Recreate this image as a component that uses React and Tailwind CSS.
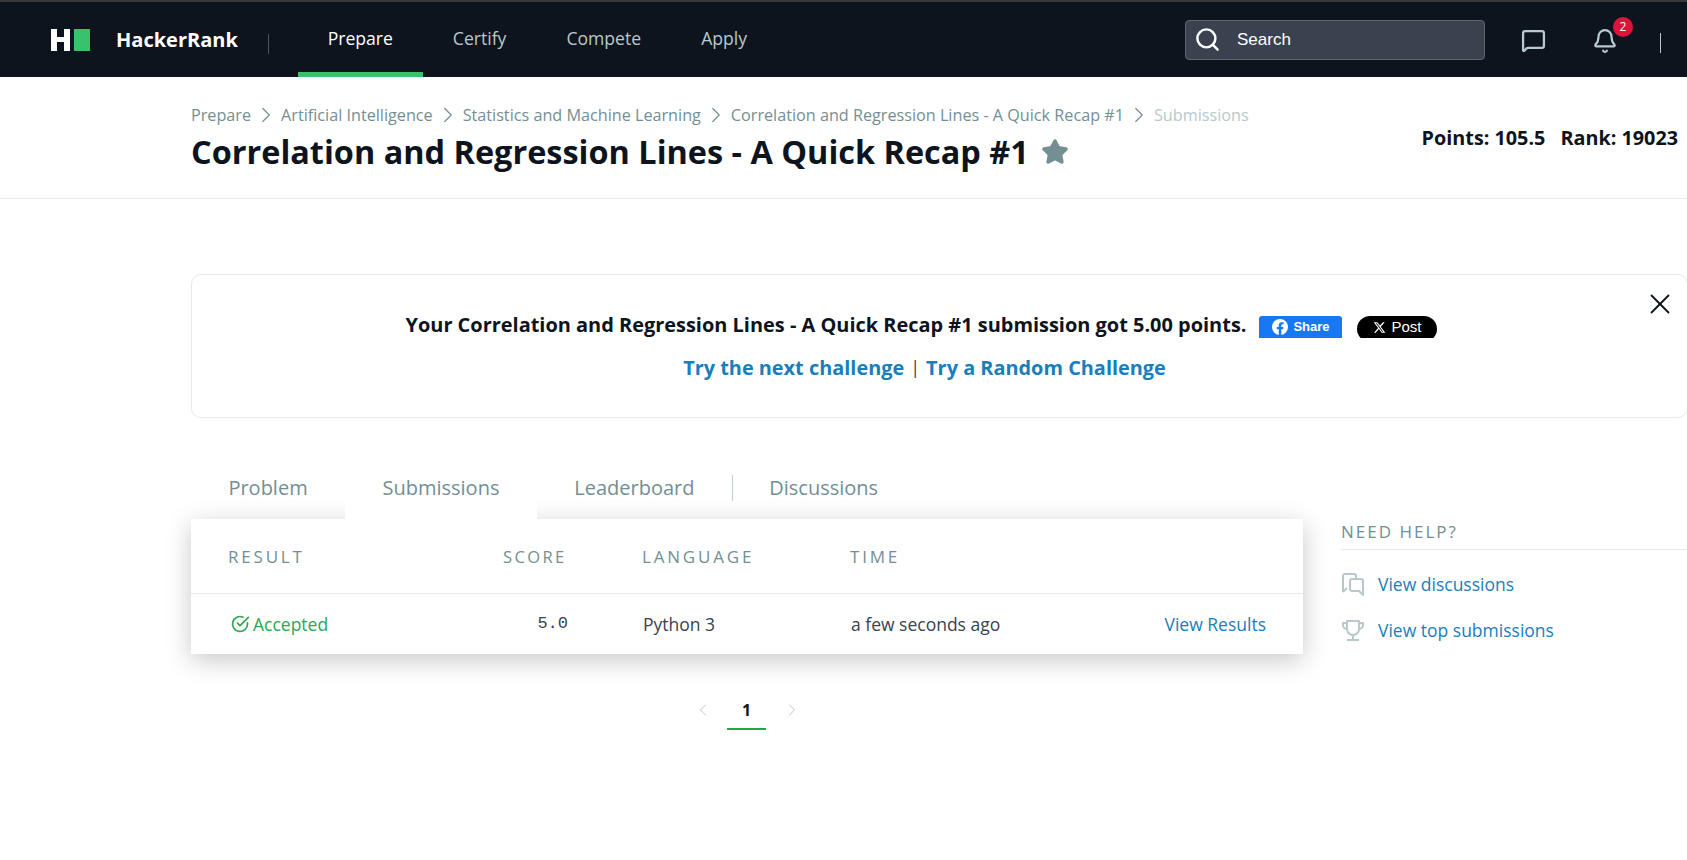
import React from "react";
import { Search, MessageSquare, Bell, ChevronRight, ChevronLeft, X, Star } from "lucide-react";

const crumbs = ["Prepare", "Artificial Intelligence", "Statistics and Machine Learning", "Correlation and Regression Lines - A Quick Recap #1"];

function Logo() {
  return (
    <div className="flex items-center gap-[4px] ml-[51px] w-[39px] h-[22px]">
      <svg width="19" height="22" viewBox="0 0 19 22"><path d="M0 0h6v8h7V0h6v22h-6v-9H6v9H0z" fill="#fff" /></svg>
      <div className="w-[16px] h-[22px] bg-[#39c16c]" />
    </div>
  );
}

function NavItem({ children, active, className }) {
  return (
    <a className={"h-full flex items-center text-[17.6px] pt-[3px] " + (active ? "text-white border-b-[5px] border-[#39c16c] " : "text-[#b7c9cc] pb-[5px] ") + className}>
      {children}
    </a>
  );
}

function Tab({ children, active, divider }) {
  return (
    <div className={"relative h-[66px] px-[37.4px] pt-[17px] text-[20px] leading-[26px] text-[#738f93] " + (active ? "bg-white z-10" : "")}>
      {children}
      {divider && <span className="absolute -right-[1px] top-[17px] h-[26px] w-px bg-[#c2cdcf]" />}
    </div>
  );
}

export default function App() {
  return (
    <div className="h-[860px] w-full overflow-hidden bg-white font-['Open_Sans',sans-serif] text-[#0e141e]">
      <header className="h-[77px] bg-[#0e141e] border-t-2 border-[#39393b] flex items-center">
        <Logo />
        <span className="ml-[26px] text-[20px] font-bold text-white">HackerRank</span>
        <span className="ml-[30px] w-px h-[20px] mt-[9px] bg-[#4b5560]" />
        <nav className="flex h-full ml-[29px]">
          <NavItem active className="w-[125px] justify-center">Prepare</NavItem>
          <NavItem className="ml-[30px]">Certify</NavItem>
          <NavItem className="ml-[60px]">Compete</NavItem>
          <NavItem className="ml-[60px]">Apply</NavItem>
        </nav>
        <div className="ml-auto flex items-center">
          <div className="w-[300px] h-[40px] rounded-[4px] border border-[#5c6672] bg-[#39424e] flex items-center pl-[8px]">
            <Search size={27} color="#fff" strokeWidth={2.2} />
            <span className="ml-[16px] font-['Liberation_Sans',sans-serif] text-[17px] text-white">Search</span>
          </div>
          <MessageSquare size={25} color="#b7c9cc" strokeWidth={2.2} className="ml-[36px] mt-[2px]" />
          <div className="relative ml-[46px]">
            <Bell size={26} color="#b7c9cc" strokeWidth={2} className="mt-[2px]" />
            <span className="absolute -top-[9px] left-[21px] w-[20px] h-[20px] rounded-full bg-[#dc143c] text-white text-[12px] flex items-center justify-center">2</span>
          </div>
          <span className="ml-[42px] mr-[26px] mt-[6px] w-px h-[20px] bg-[#b7c9cc]" />
        </div>
      </header>

      <section className="h-[122px] border-b border-[#e7eaec] pl-[191px] pr-[9px] relative">
        <div className="flex items-center pt-[25px] text-[16.2px] leading-[26px] text-[#738f93]">
          {crumbs.map((c) => (
            <React.Fragment key={c}>
              <span>{c}</span>
              <ChevronRight size={26} strokeWidth={1.1} className="mx-[2px] text-[#738f93]" />
            </React.Fragment>
          ))}
          <span className="text-[#b7c9cc]">Submissions</span>
        </div>
        <div className="flex items-start justify-between mt-[3px]">
          <div className="flex items-center">
            <h1 className="text-[32.45px] leading-[42px] font-bold">Correlation and Regression Lines - A Quick Recap #1</h1>
            <Star size={28} fill="#738f93" color="#738f93" className="ml-[12px]" />
          </div>
          <div className="text-[19.8px] leading-[27px] font-bold -mt-[7px] flex gap-[15px]">
            <span>Points: 105.5</span><span>Rank: 19023</span>
          </div>
        </div>
      </section>

      <main className="pl-[191px] pt-[75px]">
        <div className="relative w-[1497px] h-[144px] rounded-[10px] border border-[#e7eaec] pr-[36px] pt-[30px]">
          <div className="flex items-center justify-center h-[40px]">
            <span className="text-[19.95px] font-bold">Your Correlation and Regression Lines - A Quick Recap #1 submission got 5.00 points.</span>
            <a className="ml-[13px] mt-[4px] w-[83px] h-[22px] bg-[#1877f2] rounded-t-[3px] flex items-center justify-center text-white text-[13px] font-bold font-['Liberation_Sans',sans-serif]">
              <svg width="16" height="16" viewBox="0 0 24 24" className="mr-[5px]"><circle cx="12" cy="12" r="12" fill="#fff" /><path d="M16.7 15.5l.5-3.5h-3.3V9.8c0-1 .5-1.9 2-1.9h1.5v-3s-1.4-.2-2.7-.2c-2.7 0-4.5 1.6-4.5 4.6V12h-3v3.5h3V24h3.7v-8.5z" fill="#1877f2" /></svg>
              Share
            </a>
            <div className="ml-[15px] mt-[4px] w-[80px] h-[22px] overflow-hidden">
              <a className="w-[80px] h-[26px] pb-[4px] bg-black rounded-full flex items-center justify-center text-white text-[15px] font-['Liberation_Sans',sans-serif]">
                <svg width="13" height="13" viewBox="0 0 24 24" className="mr-[5px]"><path d="M18.24 2.25h3.31l-7.23 8.26 8.5 11.24h-6.66l-5.21-6.82-5.97 6.82H1.68l7.73-8.84L1.25 2.25h6.83l4.71 6.23zm-1.16 17.52h1.83L7.08 4.13H5.12z" fill="#fff" /></svg>
                Post
              </a>
            </div>
          </div>
          <div className="mt-[8px] ml-[6px] flex items-center justify-center text-[19.9px] font-bold text-[#1a7ebc]">
            <a>Try the next challenge</a>
            <span className="mx-[6px] font-normal text-[#39424e] text-[18px]">|</span>
            <a>Try a Random Challenge</a>
          </div>
          <X size={34} strokeWidth={1.3} color="#0e141e" className="absolute right-[10px] top-[12px]" />
        </div>

        <div className="flex mt-[40px]">
          <div className="w-[1112px] shrink-0">
            <div className="flex h-[61px] items-start">
              <Tab>Problem</Tab>
              <Tab active>Submissions</Tab>
              <Tab divider>Leaderboard</Tab>
              <Tab>Discussions</Tab>
            </div>
            <div className="bg-white shadow-[0_6px_24px_rgba(0,0,0,0.22)] h-[135px]">
              <div className="h-[75px] pt-[2px] border-b border-[#e7eaec] flex items-center text-[17px] tracking-[2.8px] text-[#738f93]">
                <span className="ml-[37px] w-[275px]">RESULT</span>
                <span className="w-[139px] text-[16.5px] tracking-[2.4px]">SCORE</span>
                <span className="w-[208px]">LANGUAGE</span>
                <span>TIME</span>
              </div>
              <div className="h-[60px] flex items-center text-[17.5px] text-[#39424e]">
                <div className="ml-[39px] w-[299px] flex items-center text-[#2ea550]">
                  <svg width="20" height="20" viewBox="0 0 24 24" fill="none" stroke="currentColor" strokeWidth="2" strokeLinecap="round" strokeLinejoin="round" className="mr-[3px]"><path d="M21 10.5V12a9 9 0 1 1-5.3-8.2" /><path d="M9 11l3 3L22 4" /></svg>
                  Accepted
                </div>
                <span className="w-[39px] text-right font-['Liberation_Mono',monospace] text-[17px]">5.0</span>
                <span className="ml-[75px] w-[208px]">Python 3</span>
                <span>a few seconds ago</span>
                <a className="ml-auto mr-[37px] text-[#1a7ebc]">View Results</a>
              </div>
            </div>
            <div className="flex items-center mt-[43px] ml-[502px] text-[#b7c9cc]">
              <ChevronLeft size={20} strokeWidth={1.2} />
              <span className="relative w-[39px] ml-[14px] text-center text-[16px] font-bold text-[#0e141e] leading-[26px]">
                1
                <span className="absolute left-0 top-[31px] w-[39px] h-[2px] bg-[#1ba94c]" />
              </span>
              <ChevronRight size={20} strokeWidth={1.2} className="ml-[16px]" />
            </div>
          </div>
          <aside className="ml-[38px] flex-1 mt-[62px]">
            <div className="h-[30px] border-b border-[#e7eaec] text-[17px] leading-[24px] tracking-[2px] text-[#738f93]">NEED HELP?</div>
            <div className="mt-[21px] flex items-center text-[17.5px] text-[#1a7ebc]">
              <svg width="24" height="24" viewBox="0 0 24 24" fill="none" stroke="#b7c9cc" strokeWidth="2" strokeLinejoin="round" className="mr-[13px]">
                <path d="M2 20V4a2 2 0 0 1 2-2h9a2 2 0 0 1 2 2v2" />
                <path d="M2 20l4-4" />
                <path d="M9 9a2 2 0 0 1 2-2h9a2 2 0 0 1 2 2v14l-4-4h-7a2 2 0 0 1-2-2z" />
              </svg>
              View discussions
            </div>
            <div className="mt-[20px] flex items-center text-[17.5px] text-[#1a7ebc]">
              <svg width="24" height="24" viewBox="0 0 24 24" fill="none" stroke="#b7c9cc" strokeWidth="2" strokeLinejoin="round" className="mr-[13px]">
                <path d="M6 3h12v8a6 6 0 0 1-12 0z" />
                <path d="M6 5H2v2a4 4 0 0 0 4 4M18 5h4v2a4 4 0 0 1-4 4" />
                <path d="M12 17v4" />
                <path d="M6 22h12" />
              </svg>
              View top submissions
            </div>
          </aside>
        </div>
      </main>
    </div>
  );
}
